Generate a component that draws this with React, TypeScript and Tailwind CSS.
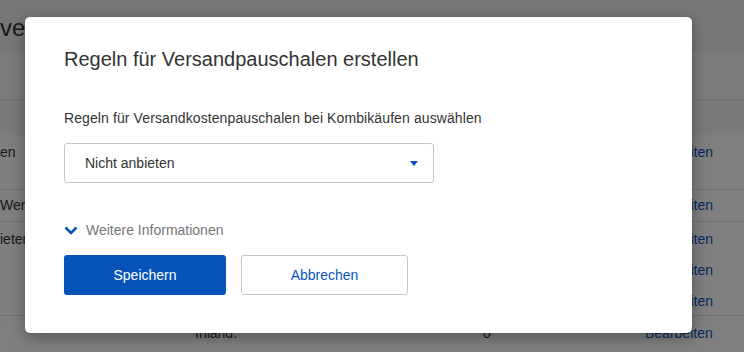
import React from 'react';

function Chevron() {
  return (
    <svg width="14" height="9" viewBox="0 0 14 9" className="shrink-0">
      <polyline points="1.5,1.5 7,7 12.5,1.5" fill="none" stroke="#0654ba" strokeWidth="2.6" />
    </svg>
  );
}

function Caret() {
  return (
    <svg width="8" height="5" viewBox="0 0 8 5" className="shrink-0">
      <polygon points="0,0 8,0 4,5" fill="#0654ba" />
    </svg>
  );
}

function BackgroundPage() {
  return (
    <div className="w-full h-full bg-[#eeeeee] text-[#333] text-[14px]">
      <div className="h-[52px] flex items-center text-[24px] leading-[28px] pt-[4px]">
        <span>verwalten</span>
      </div>
      <div className="h-[48px] bg-[#f8f8f8] border-b border-[#e2e2e2]" />
      <div className="h-[35px] bg-[#f4f4f4]" />
      <div className="h-[55px] bg-white border-b border-[#dcdcdc] flex justify-between pt-[7px] pr-[31px]">
        <span>en</span>
        <span className="text-[#0654ba]">Bearbeiten</span>
      </div>
      <div className="h-[32px] bg-white border-b border-[#dcdcdc] flex justify-between items-center pr-[31px]">
        <span>Wert</span>
        <span className="text-[#0654ba]">Bearbeiten</span>
      </div>
      <div className="h-[94px] bg-white border-b border-[#dcdcdc] flex justify-between pt-[7px] pr-[31px]">
        <span>ieten</span>
        <div className="flex flex-col gap-[11px] text-[#0654ba] leading-[20px]">
          <span>Bearbeiten</span>
          <span>Bearbeiten</span>
          <span>Bearbeiten</span>
        </div>
      </div>
      <div className="h-[40px] bg-white flex items-start pt-[7px] pr-[31px]">
        <span className="ml-[195px] w-[288px]">Inland.</span>
        <span className="w-[162px]">0</span>
        <span className="text-[#0654ba]">Bearbeiten</span>
      </div>
    </div>
  );
}

export default function App() {
  return (
    <div className="relative w-[744px] h-[352px] overflow-hidden font-['Liberation_Sans',Arial,sans-serif]">
      <BackgroundPage />
      <div className="absolute inset-0 bg-black/50 pt-[17px] pl-[25px]">
        <div className="w-[667px] h-[316px] bg-white rounded-[5px] shadow-[0_4px_16px_rgba(0,0,0,0.35)] pt-[30px] px-[39px]">
          <h2 className="text-[20px] leading-[24px] text-[#333]">Regeln für Versandpauschalen erstellen</h2>
          <p className="mt-[37px] text-[14px] leading-[20px] text-[#333] tracking-[0.1px]">
            Regeln für Versandkostenpauschalen bei Kombikäufen auswählen
          </p>
          <div className="mt-[15px] w-[370px] h-[40px] border border-[#c7c7c7] rounded-[3px] flex items-center justify-between pl-[20px] pr-[15px] text-[14px] text-[#333]">
            <span>Nicht anbieten</span>
            <Caret />
          </div>
          <div className="mt-[37px] h-[20px] flex items-center gap-[8px] text-[14px] text-[#767676]">
            <Chevron />
            <span>Weitere Informationen</span>
          </div>
          <div className="mt-[15px] flex gap-[15px]">
            <button className="w-[162px] h-[40px] rounded-[3px] bg-[#0654ba] text-white text-[14px]">
              Speichern
            </button>
            <button className="w-[167px] h-[40px] rounded-[3px] bg-white border border-[#c7c7c7] text-[#0654ba] text-[14px]">
              Abbrechen
            </button>
          </div>
        </div>
      </div>
    </div>
  );
}
